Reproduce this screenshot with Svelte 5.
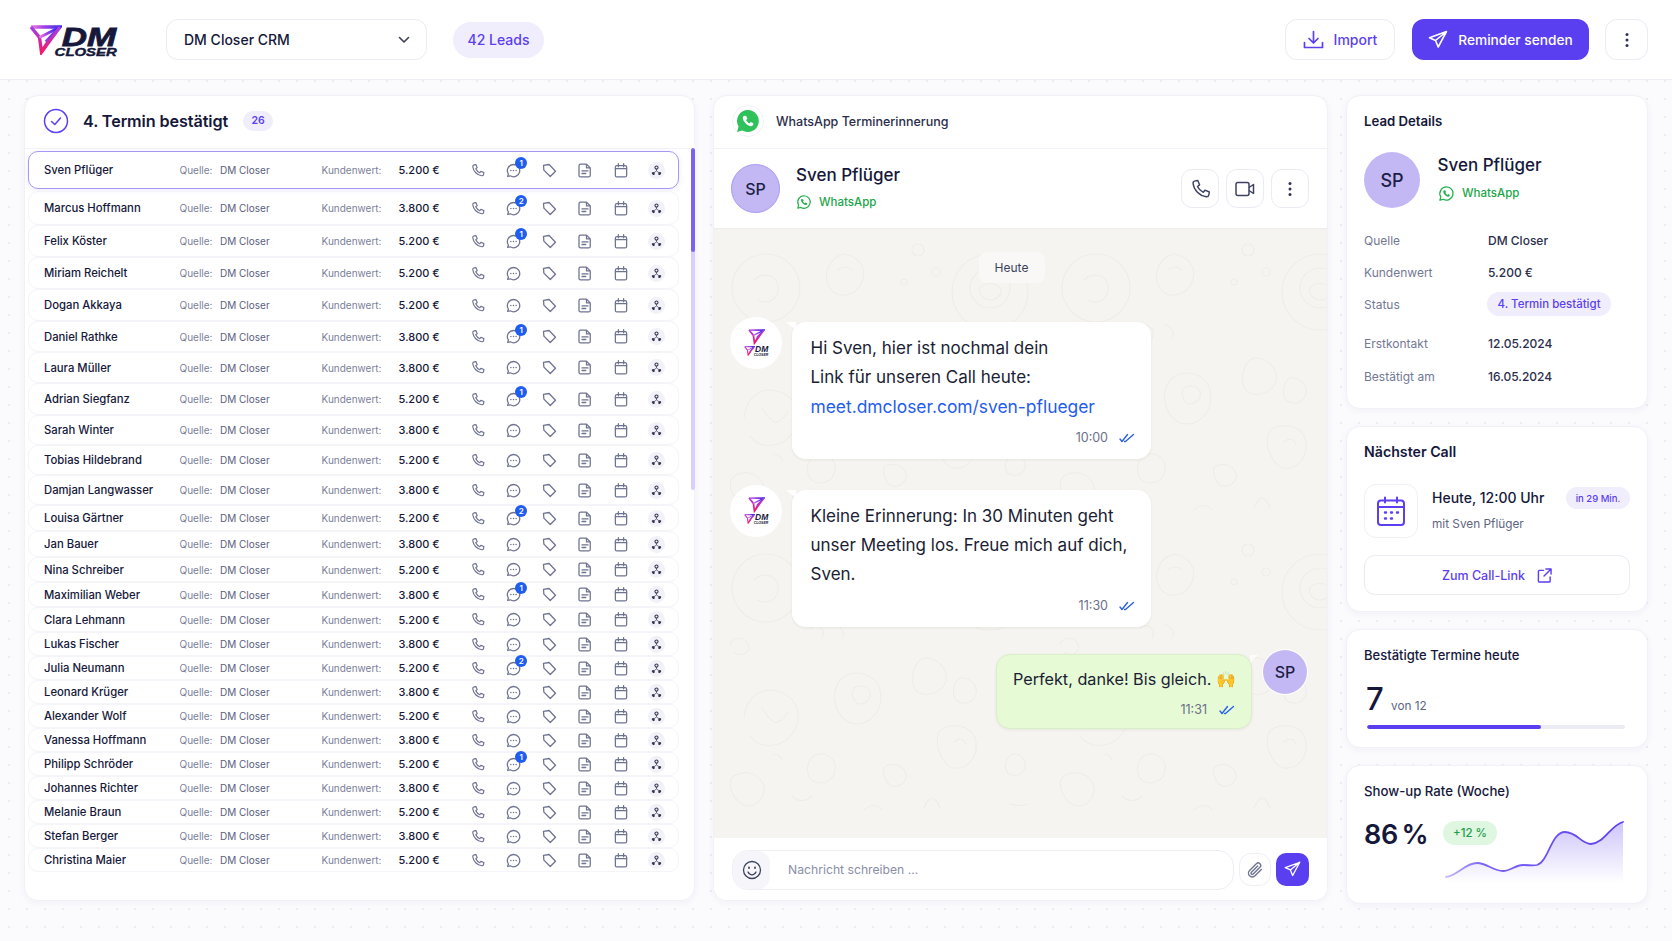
<script>
	const leads = [
		['Sven Pflüger', '5.200', 1, 38],
		['Marcus Hoffmann', '3.800', 2, 34],
		['Felix Köster', '5.200', 1, 32],
		['Miriam Reichelt', '5.200', 0, 32],
		['Dogan Akkaya', '5.200', 0, 32],
		['Daniel Rathke', '3.800', 1, 31],
		['Laura Müller', '3.800', 0, 31],
		['Adrian Siegfanz', '5.200', 1, 32],
		['Sarah Winter', '3.800', 0, 30],
		['Tobias Hildebrand', '5.200', 0, 30],
		['Damjan Langwasser', '3.800', 0, 30],
		['Louisa Gärtner', '5.200', 2, 26],
		['Jan Bauer', '3.800', 0, 26],
		['Nina Schreiber', '5.200', 0, 25],
		['Maximilian Weber', '3.800', 1, 25],
		['Clara Lehmann', '5.200', 0, 25],
		['Lukas Fischer', '3.800', 0, 24],
		['Julia Neumann', '5.200', 2, 24],
		['Leonard Krüger', '3.800', 0, 24],
		['Alexander Wolf', '5.200', 0, 24],
		['Vanessa Hoffmann', '3.800', 0, 24],
		['Philipp Schröder', '5.200', 1, 24],
		['Johannes Richter', '3.800', 0, 24],
		['Melanie Braun', '5.200', 0, 24],
		['Stefan Berger', '3.800', 0, 24],
		['Christina Maier', '5.200', 0, 24]
	];
	const details = [
		['Quelle', 'DM Closer', 'd1'],
		['Kundenwert', '5.200 €', 'd2'],
		['Status', '', 'd3'],
		['Erstkontakt', '12.05.2024', 'd4'],
		['Bestätigt am', '16.05.2024', 'd5']
	];
	const phone = 'M5.6 2.6 8 2.2l1.6 4-1.9 1.5a11 11 0 0 0 5.3 5.3l1.5-1.9 4 1.6-.4 2.4c-.2 1.2-1.2 2-2.4 1.9C9.600 16.300 4.400 11 3.700 5c-.1-1.200.7-2.200 1.900-2.400Z';
	const wa = 'M10 2.200a7.800 7.800 0 0 0-6.700 11.800L2.200 17.800l3.900-1A7.800 7.800 0 1 0 10 2.200Z';
	const waCall = 'M7.500 6.200c-.5 0-1.200.6-1.200 1.700 0 2.500 3.300 5.800 5.800 5.800 1.100 0 1.700-.8 1.700-1.300v-.8l-1.900-.9-.8 1c-1-.4-2-1.400-2.500-2.500l1-.8-.9-1.900Z';
</script>

{#snippet logoMark(w, id)}
	<svg width={w} viewBox="0 0 33 30" class="mark">
		<defs>
			<linearGradient id={id} x1="0" y1="0" x2="1" y2="0">
				<stop offset="0" stop-color="#ef7fdc" />
				<stop offset="0.45" stop-color="#a33fe8" />
				<stop offset="1" stop-color="#3a2ee6" />
			</linearGradient>
			<linearGradient id={id + 'b'} x1="0" y1="1" x2="0" y2="0">
				<stop offset="0" stop-color="#f5186a" />
				<stop offset="1" stop-color="#a33fe8" />
			</linearGradient>
		</defs>
		<path d="M2 2H31L17 17" fill="none" stroke={`url(#${id})`} stroke-width="3.400" stroke-linejoin="miter" />
		<path d="M2 2 10.500 12.500 12.500 27 19 17" fill="none" stroke={`url(#${id}b)`} stroke-width="3.400" stroke-linejoin="miter" />
		<path d="M10.500 12.500 27 4" fill="none" stroke={`url(#${id})`} stroke-width="2.600" />
		<path d="M31 2 12.500 27" fill="none" stroke={`url(#${id}b)`} stroke-width="3.200" />
	</svg>
{/snippet}

{#snippet waBadge(size)}
	<svg width={size} height={size} viewBox="0 0 20 20" fill="none" stroke="#22b14c" stroke-width="1.500">
		<path d={wa} stroke-linejoin="round" />
		<path d={waCall} fill="#22b14c" stroke="none" />
	</svg>
{/snippet}

{#snippet ticks()}
	<svg width="16" height="10" viewBox="0 0 16 10" fill="none" stroke="#2a62e8" stroke-width="1.400" stroke-linecap="round" stroke-linejoin="round">
		<path d="M1 6 3 8.500 8.500 1.500" />
		<path d="M5.500 8.500 6.500 8.500 14.500 1.500" />
	</svg>
{/snippet}

{#snippet dots()}
	<svg width="4" height="16" viewBox="0 0 4 16" fill="#2f3350"><circle cx="2" cy="2.500" r="1.500" /><circle cx="2" cy="8" r="1.500" /><circle cx="2" cy="13.500" r="1.500" /></svg>
{/snippet}

{#snippet planeIcon(size, color)}
	<svg width={size} height={size} viewBox="0 0 20 20" fill="none" stroke={color} stroke-width="1.600" stroke-linejoin="round" stroke-linecap="round">
		<path d="M18.500 1.500 1.500 7.800l6 2.700 2.700 6.500ZM7.500 10.500 18.500 1.500" />
	</svg>
{/snippet}

{#snippet miniLogo(a, b)}
	<div class="avatar-logo">
		{@render logoMark(17, a)}
		<div class="mini-row">
			{@render logoMark(11, b)}
			<div class="mini-text"><span>DM</span><i>CLOSER</i></div>
		</div>
	</div>
{/snippet}

<div class="page">
	<header class="topbar">
		<div class="logo">
			{@render logoMark(33, 'lg1')}
			<div class="logo-text">
				<span class="logo-dm">DM</span>
				<span class="logo-closer">CLOSER</span>
			</div>
		</div>
		<div class="select">
			<span>DM Closer CRM</span>
			<svg width="12" height="8" viewBox="0 0 12 8" fill="none" stroke="#3b3f5c" stroke-width="1.600" stroke-linecap="round" stroke-linejoin="round"><path d="M1.500 1.500 6 6l4.500-4.500" /></svg>
		</div>
		<div class="leads-pill">42 Leads</div>
		<div class="spacer"></div>
		<button class="btn-import">
			<svg width="21" height="20" viewBox="0 0 21 20" fill="none" stroke="#5b3ff0" stroke-width="1.700" stroke-linecap="round" stroke-linejoin="round"><path d="M10.500 1.500v11M6 8.500l4.500 4.500L15 8.500M1.500 12.500v5h18v-5" /></svg>
			Import
		</button>
		<button class="btn-primary">
			{@render planeIcon(20, '#fff')}
			Reminder senden
		</button>
		<button class="btn-more">{@render dots()}</button>
	</header>

	<main class="content">
		<section class="panel leads">
			<div class="leads-head">
				<svg width="26" height="26" viewBox="0 0 26 26" fill="none" stroke="#5b3ff0" stroke-width="1.500" stroke-linecap="round" stroke-linejoin="round"><circle cx="13" cy="13" r="11.500" /><path d="M8.500 13.500 11.800 16.500 17.500 10" /></svg>
				<h2>4. Termin bestätigt</h2>
				<span class="count">26</span>
			</div>
			<div class="list">
				{#each leads as lead, i}
					<div class="row" class:active={i === 0} style="height:{lead[3]}px">
						<span class="name">{lead[0]}</span>
						<span class="src-label">Quelle:</span>
						<span class="src">DM Closer</span>
						<span class="kw-label">Kundenwert:</span>
						<span class="kw">{lead[1]} €</span>
						<span class="ic">
							<svg width="15" height="15" viewBox="0 0 20 20" fill="none" stroke="#6e7391" stroke-width="1.600" stroke-linejoin="round"><path d={phone} /></svg>
						</span>
						<span class="ic">
							<svg width="15" height="15" viewBox="0 0 20 20" fill="none" stroke="#6e7391" stroke-width="1.700" stroke-linejoin="round"><path d="M10 2a8.200 8.200 0 0 0-6.800 12.700L2.200 18l3.500-.9A8.200 8.200 0 1 0 10 2Z" /><path d="M6.500 10h.01M10 10h.01M13.500 10h.01" stroke-linecap="round" stroke-width="2" /></svg>
							{#if lead[2]}<b class="badge">{lead[2]}</b>{/if}
						</span>
						<span class="ic">
							<svg width="15" height="15" viewBox="0 0 20 20" fill="none" stroke="#6e7391" stroke-width="1.700" stroke-linejoin="round"><path d="M2 3.200 9.500 2l8.500 9-7 7-8.500-8.500ZM6.200 6.500h.01" /></svg>
						</span>
						<span class="ic">
							<svg width="14" height="15" viewBox="0 0 18 20" fill="none" stroke="#6e7391" stroke-width="1.700" stroke-linejoin="round" stroke-linecap="round"><path d="M3 1.500h8l5 5v10a2 2 0 0 1-2 2H3a2 2 0 0 1-2-2v-13a2 2 0 0 1 2-2ZM11 1.500v5h5M5 10.500h8M5 14h5" /></svg>
						</span>
						<span class="ic">
							<svg width="14" height="15" viewBox="0 0 18 20" fill="none" stroke="#6e7391" stroke-width="1.700" stroke-linejoin="round" stroke-linecap="round"><rect x="1.500" y="3.500" width="15" height="15" rx="2" /><path d="M1.500 7.500h15M5.500 1v4M12.500 1v4" /></svg>
						</span>
						<span class="ic org">
							<svg width="11" height="11" viewBox="0 0 12 12" fill="#2f3350"><circle cx="6" cy="2.800" r="1.700" fill="none" stroke="#2f3350" stroke-width="1.100" /><circle cx="2.300" cy="9.500" r="1.800" /><circle cx="9.700" cy="9.500" r="1.800" /><path d="M6 4.500v2M6 6.500 3.200 8.500M6 6.500l2.800 2" stroke="#2f3350" stroke-width=".7" /></svg>
						</span>
					</div>
				{/each}
			</div>
			<div class="scrollbar"><div class="thumb"></div></div>
		</section>

		<section class="panel chat">
			<div class="chat-title">
				<span class="wa-round">
					<svg width="28" height="28" viewBox="0 0 20 20"><path d={wa} fill="#2fc15a" /><path d={waCall} fill="#fff" /></svg>
				</span>
				WhatsApp Terminerinnerung
			</div>
			<div class="chat-contact">
				<div class="avatar big">SP</div>
				<div class="who">
					<div class="who-name">Sven Pflüger</div>
					<div class="who-wa">{@render waBadge(16)} WhatsApp</div>
				</div>
				<div class="spacer"></div>
				<button class="sq">
					<svg width="22" height="22" viewBox="0 0 20 20" fill="none" stroke="#3d4260" stroke-width="1.300" stroke-linejoin="round"><path d={phone} /></svg>
				</button>
				<button class="sq">
					<svg width="20" height="16" viewBox="0 0 20 16" fill="none" stroke="#3d4260" stroke-width="1.500" stroke-linejoin="round"><rect x="1" y="1.500" width="13" height="13" rx="2" /><path d="M14 6.500 18.500 3.500v9L14 9.500" /></svg>
				</button>
				<button class="sq">{@render dots()}</button>
			</div>
			<div class="wall">
				<svg class="doodles" width="100%" height="100%">
					<defs>
						<pattern id="doodle" width="330" height="300" patternUnits="userSpaceOnUse">
							<g fill="none" stroke="#f0ede8" stroke-width="1.200" stroke-linecap="round">
								<circle cx="52" cy="60" r="34" /><path d="M40 52c8-8 22-6 24 6s-10 20-20 14" />
								<path d="M130 26c14 2 24 14 18 28s-24 18-32 6-2-30 14-34ZM124 42c4-4 10-4 14 0" />
								<circle cx="204" cy="22" r="6" /><circle cx="222" cy="44" r="4" /><circle cx="190" cy="54" r="3" />
								<circle cx="276" cy="64" r="38" /><circle cx="276" cy="60" r="20" /><path d="M266 60c4-6 16-6 20 0s-4 12-10 12-12-6-10-12Z" />
								<path d="M96 100c10-6 16 2 12 10M120 96c6 2 12 8 8 14M16 116c4-8 14-8 18 0s-8 14-14 8" />
								<path d="M30 190c2-22 18-32 36-26s24 26 12 42-34 14-42 2M48 180c4 6 8 12 12 14s10-4 14-10" />
								<path d="M128 150c14-10 34-4 38 12s-6 34-24 34-30-30-14-46ZM140 160c6-4 14-2 16 4s-4 12-10 12-10-10-6-16Z" />
								<path d="M214 130c10 2 20 10 18 22s-18 18-28 12-6-36 10-34ZM250 150c10 2 16 12 10 20s-18 6-20-2 2-20 10-18ZM296 128c8 0 14 6 10 14s-16 8-18 2 2-16 8-16Z" />
								<path d="M230 200c14-6 30 0 32 14s-8 28-22 26-24-34-10-40ZM240 214c4-4 10-4 12 2" />
								<path d="M110 226c8 2 14 10 10 20s-18 12-24 4-2-26 14-24ZM20 248c10-6 22-4 28 6s-2 24-14 24-24-22-14-30Z" />
								<path d="M172 238c8-4 18 0 20 8s-8 14-14 12-12-16-6-20ZM60 226c4 0 8 4 8 6M78 268c6 6 14 6 20 0M150 282c6-6 14-6 18 0M300 226c8 0 14 8 10 16s-16 6-18 0 2-16 8-16ZM296 276c6 2 12 2 18 0M210 280c2-6 6-10 8-10s6 4 8 10" />
							</g>
						</pattern>
					</defs>
					<rect width="100%" height="100%" fill="url(#doodle)" />
				</svg>
				<div class="day"><span>Heute</span></div>
				<div class="msg m1">
					{@render miniLogo('lg2', 'lg3')}
					<div class="bubble">
						<p>Hi Sven, hier ist nochmal dein</p>
						<p>Link für unseren Call heute:</p>
						<p class="link">meet.dmcloser.com/sven-pflueger</p>
						<div class="meta">10:00 {@render ticks()}</div>
					</div>
				</div>
				<div class="msg m2">
					{@render miniLogo('lg4', 'lg5')}
					<div class="bubble">
						<p>Kleine Erinnerung: In 30 Minuten geht</p>
						<p>unser Meeting los. Freue mich auf dich,</p>
						<p>Sven.</p>
						<div class="meta">11:30 {@render ticks()}</div>
					</div>
				</div>
				<div class="msg mine">
					<div class="bubble green">
						<p>Perfekt, danke! Bis gleich. <span class="emoji">🙌</span></p>
						<div class="meta">11:31 {@render ticks()}</div>
					</div>
					<div class="avatar small">SP</div>
				</div>
			</div>
			<div class="composer">
				<div class="input">
					<span class="smile">
						<svg width="20" height="20" viewBox="0 0 20 20" fill="none" stroke="#3d4260" stroke-width="1.300" stroke-linecap="round"><circle cx="10" cy="10" r="8.500" /><path d="M6 12c1 2 2.500 2.800 4 2.800s3-.8 4-2.800" /><path d="M7 7.500v.6M13 7.500v.6" stroke-width="1.800" /></svg>
					</span>
					<span class="ph">Nachricht schreiben ...</span>
				</div>
				<button class="clip">
					<svg width="18" height="18" viewBox="0 0 20 20" fill="none" stroke="#6e7391" stroke-width="1.500" stroke-linecap="round" stroke-linejoin="round"><path d="M17 9.500 10 16.500a4.200 4.200 0 0 1-6-6l7.500-7.500a2.800 2.800 0 0 1 4 4l-7.500 7.500a1.400 1.400 0 0 1-2-2L13 5.500" /></svg>
				</button>
				<button class="send">{@render planeIcon(17, '#fff')}</button>
			</div>
		</section>

		<aside class="side">
			<section class="panel card details">
				<h3>Lead Details</h3>
				<div class="lead-id">
					<div class="avatar plain">SP</div>
					<div class="who">
						<div class="who-name">Sven Pflüger</div>
						<div class="who-wa">{@render waBadge(17)} WhatsApp</div>
					</div>
				</div>
				<dl>
					{#each details as d}
						<div class="dl-row {d[2]}">
							<dt>{d[0]}</dt>
							{#if d[1]}<dd>{d[1]}</dd>{:else}<dd><span class="status">4. Termin bestätigt</span></dd>{/if}
						</div>
					{/each}
				</dl>
			</section>

			<section class="panel card next">
				<h3 class="big-title">Nächster Call</h3>
				<div class="next-row">
					<span class="cal">
						<svg width="30" height="31" viewBox="0 0 30 31" fill="none" stroke="#5b3ff0" stroke-width="2" stroke-linecap="round" stroke-linejoin="round"><rect x="2" y="4.500" width="26" height="24.500" rx="3" /><path d="M2 11h26M9 1.500v5M21 1.500v5" /><path d="M9 16.500h1M15 16.500h1M21 16.500h1M9 22.500h1M15 22.500h1" stroke-width="2.400" /></svg>
					</span>
					<div class="next-text">
						<strong>Heute, 12:00 Uhr</strong>
						<small>mit Sven Pflüger</small>
					</div>
					<span class="soon">in 29 Min.</span>
				</div>
				<button class="call-link">
					Zum Call-Link
					<svg width="15" height="15" viewBox="0 0 16 16" fill="none" stroke="#5b3ff0" stroke-width="1.500" stroke-linecap="round" stroke-linejoin="round"><path d="M7 2.500H2.500a1.500 1.500 0 0 0-1 1V14a1 1 0 0 0 1 1H13a1 1 0 0 0 1-1V9.500M9.500 1H15v5.500M15 1 7.500 8.500" /></svg>
				</button>
			</section>

			<section class="panel card today">
				<h3 class="light">Bestätigte Termine heute</h3>
				<div class="today-num"><span class="seven">7</span><span class="von">von 12</span></div>
				<div class="bar"><div class="bar-fill" style="width:{(7 / 12) * 100 + 9}%"></div></div>
			</section>

			<section class="panel card rate">
				<h3 class="light wide">Show-up Rate (Woche)</h3>
				<div class="rate-num">86 %</div>
				<span class="plus">+12 %</span>
				<svg class="spark" width="180" height="62" viewBox="0 0 180 62">
					<defs>
						<linearGradient id="area" x1="0" y1="0" x2="0" y2="1">
							<stop offset="0" stop-color="#5b3ff0" stop-opacity=".3" />
							<stop offset="1" stop-color="#5b3ff0" stop-opacity="0" />
						</linearGradient>
						<linearGradient id="line" x1="0" y1="0" x2="1" y2="0">
							<stop offset="0" stop-color="#c9bdf8" />
							<stop offset=".2" stop-color="#7d64f2" />
							<stop offset="1" stop-color="#5b3ff0" />
						</linearGradient>
					</defs>
					<path d="M1 56C12 55 20 42 32 42 42 42 48 50 58 50 66 50 70 44 78 44 84 44 88 45 92 44 104 40 106 11 120 11 132 11 136 23 146 23 158 23 166 4 178 1V62H1Z" fill="url(#area)" />
					<path d="M1 56C12 55 20 42 32 42 42 42 48 50 58 50 66 50 70 44 78 44 84 44 88 45 92 44 104 40 106 11 120 11 132 11 136 23 146 23 158 23 166 4 178 1" fill="none" stroke="url(#line)" stroke-width="1.800" stroke-linecap="round" />
				</svg>
			</section>
		</aside>
	</main>
</div>

<style>
	:global(body) {
		margin: 0;
		background: #fbfbfe;
	}
	.page {
		width: 1672px;
		height: 941px;
		overflow: hidden;
		font-family: Inter, 'Noto Sans', sans-serif;
		color: #15183a;
		background-color: #fbfbfe;
		background-image: radial-gradient(#e9e9f3 0.7px, transparent 0.8px);
		background-size: 18px 18px;
	}
	button {
		font-family: inherit;
		cursor: pointer;
	}
	.spacer {
		flex: 1;
	}
	.topbar {
		height: 80px;
		box-sizing: border-box;
		display: flex;
		align-items: center;
		padding: 0 24px 0 29px;
		background: #fff;
		border-bottom: 1px solid #eeeef6;
	}
	.logo {
		width: 90px;
		height: 34px;
		margin-right: 47px;
		position: relative;
	}
	.mark {
		display: block;
		flex: none;
	}
	.logo .mark {
		margin-top: 2px;
	}
	.logo-text {
		position: absolute;
		left: 0;
		top: 4px;
		width: 87.500px;
		display: flex;
		flex-direction: column;
		align-items: flex-end;
		font-family: 'Liberation Sans', sans-serif;
		font-style: italic;
		font-weight: 700;
		color: #15183a;
	}
	.logo-dm {
		font-size: 26.500px;
		line-height: 21px;
		height: 21px;
		transform: scaleX(1.32);
		transform-origin: right center;
		-webkit-text-stroke: 0.800px #15183a;
	}
	.logo-closer {
		font-size: 10.500px;
		line-height: 8px;
		height: 8px;
		transform: scaleX(1.42);
		transform-origin: right center;
		-webkit-text-stroke: 0.400px #15183a;
	}
	.select {
		width: 261px;
		height: 41px;
		box-sizing: border-box;
		border: 1px solid #ebebf4;
		border-radius: 12px;
		display: flex;
		align-items: center;
		justify-content: space-between;
		padding: 0 16px 0 17px;
		font-size: 14px;
		font-weight: 500;
		margin-right: 26px;
	}
	.leads-pill {
		width: 91px;
		height: 36px;
		border-radius: 18px;
		background: #f0edfd;
		color: #5b3ff0;
		font-size: 14px;
		font-weight: 500;
		display: flex;
		align-items: center;
		justify-content: center;
	}
	.btn-import {
		width: 110px;
		height: 41px;
		border: 1px solid #ebebf4;
		border-radius: 12px;
		background: #fff;
		color: #5b3ff0;
		font-size: 14px;
		font-weight: 500;
		display: flex;
		align-items: center;
		justify-content: center;
		gap: 10px;
		margin-right: 17px;
	}
	.btn-primary {
		width: 177px;
		height: 41px;
		border: 0;
		border-radius: 12px;
		background: #5a3ff1;
		color: #fff;
		font-size: 13.700px;
		font-weight: 500;
		display: flex;
		align-items: center;
		justify-content: center;
		gap: 10px;
		margin-right: 16px;
	}
	.btn-more {
		width: 43px;
		height: 41px;
		border: 1px solid #ebebf4;
		border-radius: 12px;
		background: #fff;
		display: flex;
		align-items: center;
		justify-content: center;
	}
	.content {
		display: grid;
		grid-template-columns: 671px 615px 302px;
		column-gap: 18px;
		padding: 15px 24px 0 24px;
	}
	.panel {
		background: #fff;
		border: 1px solid #f1f1f7;
		border-radius: 14px;
		box-shadow: 0 2px 6px rgba(60, 60, 120, 0.05);
		box-sizing: border-box;
	}
	.leads {
		height: 806px;
		position: relative;
	}
	.leads-head {
		height: 53px;
		box-sizing: border-box;
		display: flex;
		align-items: center;
		padding: 0 0 3px 18px;
		border-bottom: 1px solid #f3f3f8;
	}
	.leads-head h2 {
		margin: 0 0 0 14px;
		font-size: 16.200px;
		font-weight: 600;
		letter-spacing: -0.100px;
	}
	.count {
		margin-left: 15px;
		width: 30px;
		height: 20px;
		border-radius: 10px;
		background: #f0edfd;
		color: #5b3ff0;
		font-size: 10.500px;
		font-weight: 600;
		display: flex;
		align-items: center;
		justify-content: center;
	}
	.list {
		padding: 2px 15px 0 2px;
		display: flex;
		flex-direction: column;
	}
	.row {
		box-sizing: border-box;
		flex: none;
		display: grid;
		grid-template-columns: 135.500px 40.500px 101.500px 77px 61.500px repeat(6, 35.800px);
		align-items: center;
		padding-left: 15px;
		border: 1px solid #f4f4f9;
		border-radius: 10px;
		margin-left: 1px;
		font-size: 11px;
	}
	.row.active {
		border: 1.500px solid #a897f5;
		box-shadow: 0 1px 5px rgba(91, 63, 240, 0.12);
		margin-bottom: 2px;
	}
	.name {
		font-weight: 500;
		font-size: 11.300px;
		white-space: nowrap;
	}
	.src-label,
	.kw-label {
		color: #7b8099;
		font-size: 10px;
		white-space: nowrap;
	}
	.src {
		color: #5b607c;
		font-size: 10px;
		white-space: nowrap;
	}
	.kw {
		font-size: 11px;
		font-weight: 500;
		white-space: nowrap;
	}
	.ic {
		position: relative;
		display: flex;
		justify-content: center;
		align-items: center;
	}
	.badge {
		position: absolute;
		left: 19.500px;
		top: -5.500px;
		width: 12px;
		height: 12px;
		border-radius: 50%;
		background: #1f5cf0;
		color: #fff;
		font-size: 8px;
		font-weight: 600;
		display: flex;
		align-items: center;
		justify-content: center;
	}
	.org svg {
		box-sizing: content-box;
		padding: 3px;
		background: #f1f1f7;
		border-radius: 50%;
	}
	.scrollbar {
		position: absolute;
		right: -1px;
		top: 52px;
		width: 4.500px;
		height: 342px;
		border-radius: 2px;
		overflow: hidden;
		background: #d8d0fa;
	}
	.thumb {
		height: 104px;
		background: #7c62f3;
		border-radius: 2px;
	}
	.chat {
		height: 806px;
		display: flex;
		flex-direction: column;
		overflow: hidden;
	}
	.chat-title {
		height: 53px;
		flex: none;
		box-sizing: border-box;
		display: flex;
		align-items: center;
		gap: 12px;
		padding: 0 0 2px 18px;
		font-size: 12.500px;
		font-weight: 500;
		color: #2a2e4c;
		border-bottom: 1px solid #f1f1f7;
	}
	.wa-round {
		width: 32px;
		height: 32px;
		border-radius: 50%;
		background: #fff;
		border: 1px solid #f1f1f7;
		box-sizing: border-box;
		display: flex;
		align-items: center;
		justify-content: center;
	}
	.chat-contact {
		height: 79px;
		flex: none;
		box-sizing: border-box;
		display: flex;
		align-items: center;
		padding: 0 18px 0 17px;
	}
	.avatar {
		border-radius: 50%;
		background: #c4b8f4;
		color: #1c1f45;
		display: flex;
		align-items: center;
		justify-content: center;
		font-weight: 500;
		flex: none;
	}
	.avatar.big {
		width: 49px;
		height: 49px;
		font-size: 16px;
		border: 1px solid #a897f5;
		box-sizing: border-box;
		margin-right: 16px;
	}
	.chat-contact .who {
		margin-top: -4px;
	}
	.who-name {
		font-size: 17px;
		font-weight: 500;
		line-height: 22px;
	}
	.who-wa {
		margin-top: 8px;
		display: flex;
		align-items: center;
		gap: 7px;
		color: #1aa648;
		font-size: 11.500px;
		font-weight: 500;
	}
	.sq {
		width: 38px;
		height: 39px;
		border: 1px solid #ebebf4;
		border-radius: 11px;
		background: #fff;
		display: flex;
		align-items: center;
		justify-content: center;
		margin-left: 7px;
		padding: 0;
	}
	.wall {
		flex: 1;
		position: relative;
		background: #f6f4f0;
		box-shadow: inset 0 1px 2px rgba(60, 60, 80, 0.04);
		padding: 24px 16px 0;
		display: flex;
		flex-direction: column;
	}
	.doodles {
		position: absolute;
		inset: 0;
	}
	.day {
		position: relative;
		display: flex;
		justify-content: center;
		margin: 0 18px 39px 0;
	}
	.day span {
		width: 66px;
		height: 31px;
		border-radius: 8px;
		background: #f9f8f6;
		color: #3d4260;
		font-size: 12px;
		display: flex;
		align-items: center;
		justify-content: center;
	}
	.msg {
		position: relative;
		display: flex;
		align-items: flex-start;
	}
	.m1 {
		margin-bottom: 31.500px;
	}
	.m2 {
		margin-bottom: 27px;
	}
	.avatar-logo {
		width: 52px;
		height: 52px;
		margin: -5px 10px 0 0;
		border-radius: 50%;
		background: #fff;
		display: flex;
		flex-direction: column;
		align-items: center;
		justify-content: center;
		flex: none;
	}
	.mini-row {
		display: flex;
		align-items: center;
		margin-top: 1px;
	}
	.mini-text {
		display: flex;
		flex-direction: column;
		align-items: flex-end;
		font-family: 'Liberation Sans', sans-serif;
		font-weight: 700;
		font-style: italic;
		margin-left: -1px;
	}
	.mini-text span {
		font-size: 8.500px;
		line-height: 7px;
	}
	.mini-text i {
		font-size: 3.500px;
		line-height: 4px;
	}
	.bubble {
		position: relative;
		width: 359px;
		box-sizing: border-box;
		background: #fff;
		border-radius: 14px;
		padding: 12px 7px 11px 18.500px;
		box-shadow: 0 1px 3px rgba(70, 60, 40, 0.08);
		font-size: 17px;
		color: #1a1d33;
	}
	.bubble::before {
		content: '';
		position: absolute;
		left: -6px;
		top: 0;
		border-top: 8px solid #fff;
		border-left: 10px solid transparent;
	}
	.bubble p {
		margin: 0;
		line-height: 29px;
		white-space: nowrap;
	}
	.bubble .link {
		color: #1f5cf0;
		font-size: 17.400px;
	}
	.meta {
		display: flex;
		justify-content: flex-end;
		align-items: center;
		gap: 11px;
		height: 20px;
		margin-top: 6.500px;
		padding-right: 9px;
		color: #6a6f88;
		font-size: 12.500px;
	}
	.mine {
		justify-content: flex-end;
		padding-right: 4px;
	}
	.mine .bubble {
		width: 256px;
		height: 75px;
		padding-top: 10px;
		padding-left: 16px;
		background: #e6fad5;
		border: 1px solid #d9efca;
		margin-right: 11px;
		font-size: 16.200px;
	}
	.mine .bubble::before {
		left: auto;
		right: -7px;
		border-top-color: #fff;
		border-left: 0;
		border-right: 8px solid transparent;
		opacity: 0.7;
	}
	.mine .meta {
		gap: 12px;
		margin-top: 6px;
		font-size: 12.500px;
	}
	.emoji {
		font-family: 'Noto Color Emoji', sans-serif;
		font-size: 16px;
	}
	.avatar.small {
		width: 44px;
		height: 44px;
		font-size: 16px;
		margin-top: -4px;
		box-shadow: 0 0 0 1px #fff;
	}
	.composer {
		height: 62px;
		flex: none;
		box-sizing: border-box;
		background: #fff;
		display: flex;
		align-items: center;
		padding: 1px 18px 0 18px;
	}
	.input {
		flex: 1;
		height: 40px;
		border: 1px solid #eeeef6;
		border-radius: 16px;
		display: flex;
		align-items: center;
		overflow: hidden;
		box-sizing: border-box;
	}
	.smile {
		width: 37px;
		height: 38px;
		background: #f6f6fa;
		display: flex;
		align-items: center;
		justify-content: center;
		border-radius: 16px 12px 12px 16px;
		margin-right: 18px;
	}
	.ph {
		font-size: 12.200px;
		color: #8a8ea6;
	}
	.clip {
		width: 32px;
		height: 33px;
		margin-left: 5px;
		border: 1px solid #eeeef6;
		border-radius: 12px;
		background: #fff;
		padding: 0;
		display: flex;
		align-items: center;
		justify-content: center;
	}
	.send {
		width: 33px;
		height: 33px;
		margin-left: 5px;
		border: 0;
		border-radius: 10px;
		background: #5a3ff1;
		padding: 0;
		display: flex;
		align-items: center;
		justify-content: center;
	}
	.side {
		display: flex;
		flex-direction: column;
		gap: 17px;
	}
	.card {
		padding: 0 17px;
		position: relative;
	}
	.card h3 {
		margin: 0;
		font-size: 13.200px;
		font-weight: 600;
		line-height: 16px;
	}
	.card h3.big-title {
		font-size: 14.200px;
	}
	.card h3.light {
		font-size: 13px;
		font-weight: 500;
	}
	.card h3.light.wide {
		font-size: 13.200px;
	}
	.details {
		height: 314px;
		padding-top: 17px;
	}
	.lead-id {
		display: flex;
		align-items: center;
		gap: 17.500px;
		margin-top: 23px;
	}
	.avatar.plain {
		width: 56px;
		height: 56px;
		font-size: 18px;
	}
	.lead-id .who {
		margin-top: -4px;
	}
	.lead-id .who-wa {
		gap: 7.500px;
		margin-top: 8.500px;
	}
	dl {
		margin: 17px 0 0;
	}
	.dl-row {
		display: flex;
		align-items: center;
		font-size: 12px;
	}
	.dl-row.d1 {
		height: 31px;
	}
	.dl-row.d2 {
		height: 32px;
	}
	.dl-row.d3 {
		height: 32px;
	}
	.dl-row.d4 {
		height: 38px;
		margin-top: 4px;
	}
	.dl-row.d5 {
		height: 28px;
	}
	dt {
		width: 124px;
		color: #737893;
	}
	dd {
		margin: 0;
		font-weight: 500;
		color: #2a2e4c;
	}
	.status {
		display: inline-block;
		margin-left: -1px;
		padding: 0 10.500px;
		height: 24px;
		line-height: 24px;
		border-radius: 12px;
		background: #f0edfd;
		color: #5b3ff0;
		font-size: 11.500px;
	}
	.next {
		height: 186px;
		padding-top: 17px;
	}
	.next-row {
		display: flex;
		align-items: flex-start;
		margin-top: 24px;
	}
	.cal {
		width: 54px;
		height: 54px;
		border: 1px solid #f0f0f7;
		border-radius: 12px;
		display: flex;
		align-items: center;
		justify-content: center;
		margin-right: 14px;
		flex: none;
		box-sizing: border-box;
	}
	.next-text {
		display: flex;
		flex-direction: column;
		flex: 1;
		padding-top: 2px;
	}
	.next-text strong {
		font-size: 14px;
		font-weight: 500;
		line-height: 24px;
		white-space: nowrap;
	}
	.next-text small {
		font-size: 11.800px;
		line-height: 14px;
		color: #60657f;
		margin-top: 7px;
	}
	.soon {
		width: 64px;
		height: 22px;
		border-radius: 11px;
		background: #f0edfd;
		color: #5b3ff0;
		font-size: 9.500px;
		font-weight: 500;
		display: flex;
		align-items: center;
		justify-content: center;
		margin-top: 3px;
		flex: none;
	}
	.call-link {
		width: 100%;
		height: 40px;
		margin-top: 17px;
		border: 1px solid #ebebf4;
		border-radius: 11px;
		background: #fff;
		color: #5b3ff0;
		font-size: 12.500px;
		font-weight: 500;
		display: flex;
		align-items: center;
		justify-content: center;
		gap: 12px;
	}
	.today {
		height: 119px;
		padding-top: 17px;
	}
	.today-num {
		display: flex;
		align-items: baseline;
		margin-top: 17px;
		padding-left: 2px;
		height: 34px;
	}
	.seven {
		font-size: 31px;
		font-weight: 500;
		width: 25px;
	}
	.von {
		font-size: 11.800px;
		color: #60657f;
	}
	.bar {
		margin: 11px 5px 0 3px;
		height: 4px;
		border-radius: 2px;
		background: #ececf5;
		overflow: hidden;
	}
	.bar-fill {
		height: 100%;
		background: #5a3ff1;
		border-radius: 2px;
	}
	.rate {
		height: 139px;
		padding-top: 17px;
	}
	.rate-num {
		margin-top: 18px;
		font-size: 27px;
		font-weight: 600;
		line-height: 36px;
		word-spacing: -3px;
		letter-spacing: -0.300px;
	}
	.plus {
		position: absolute;
		left: 96px;
		top: 55px;
		width: 54px;
		height: 24px;
		border-radius: 12px;
		background: #dff6e0;
		color: #1f9d4d;
		font-size: 11.500px;
		font-weight: 500;
		display: flex;
		align-items: center;
		justify-content: center;
	}
	.spark {
		position: absolute;
		left: 98px;
		top: 55px;
	}
</style>
